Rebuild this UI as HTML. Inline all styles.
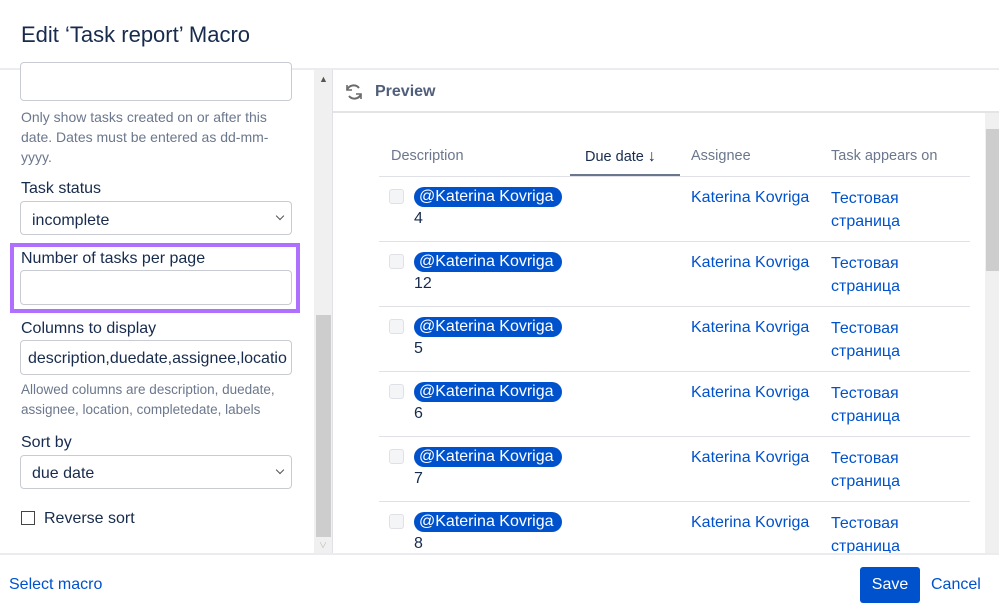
<!DOCTYPE html>
<html><head><style>
*{box-sizing:border-box;margin:0;padding:0}
body{width:999px;height:609px;overflow:hidden;background:#fff;font-family:"Liberation Sans","Noto Sans CJK SC",sans-serif;color:#172b4d;position:relative}
.abs{position:absolute}
.inp{position:absolute;left:20px;width:272px;border:1px solid #c8ccd2;border-radius:4px;background:#fff;font-size:16px;color:#172b4d;padding-left:11px}
.lbl{position:absolute;left:21px;font-size:16px;color:#172b4d}
.help{position:absolute;left:21px;font-size:13.5px;color:#6b778c;line-height:20px;width:270px}
.th{position:absolute;top:148px;font-size:14.5px;color:#6b778c}
.row{position:absolute;left:379px;width:591px;height:65px;border-top:1px solid #dfe1e6}
.cb{position:absolute;left:10px;top:12px;width:15px;height:15px;border:1px solid #dfe1e6;border-radius:3px;background:#f4f5f7}
.badge{position:absolute;left:35px;top:10px;height:20px;width:148px;background:#0052cc;color:#fff;border-radius:10px;font-size:16px;line-height:20px;padding-left:5px}
.num{position:absolute;left:35px;top:33px;font-size:16px;color:#172b4d}
.as{position:absolute;left:312px;top:12px;font-size:16px;color:#0052cc}
.pg{position:absolute;left:452px;top:10px;font-size:16px;color:#0052cc;line-height:23px}
.chev{position:absolute;right:8px;top:50%;margin-top:-5px;width:6px;height:6px;border-right:1.3px solid #555;border-bottom:1.3px solid #555;transform:rotate(45deg)}
</style></head><body>
<div class="abs" style="left:21px;top:22px;font-size:22px;color:#172b4d">Edit ‘Task report’ Macro</div>
<div class="abs" style="left:0;top:68px;width:999px;height:2px;background:#ebecf0"></div>

<!-- left panel -->
<div class="inp" style="top:62px;height:39px"></div>
<div class="help" style="top:107px;font-size:14px;width:252px">Only show tasks created on or after this date. Dates must be entered as dd-mm-yyyy.</div>
<div class="lbl" style="top:180px">Task status</div>
<div class="inp" style="top:201px;height:34px;line-height:38px;overflow:hidden">incomplete<span class="chev"></span></div>
<div class="abs" style="left:10px;top:243px;width:290px;height:70px;border:4px solid #b070ff"></div>
<div class="lbl" style="top:250px">Number of tasks per page</div>
<div class="inp" style="top:270px;height:35px"></div>
<div class="lbl" style="top:320px">Columns to display</div>
<div class="inp" style="top:340px;height:35px;line-height:35px;overflow:hidden;white-space:nowrap;padding-left:7px">description,duedate,assignee,locatio</div>
<div class="help" style="top:380px">Allowed columns are description, duedate, assignee, location, completedate, labels</div>
<div class="lbl" style="top:434px">Sort by</div>
<div class="inp" style="top:455px;height:34px;line-height:36px">due date<span class="chev"></span></div>
<div class="abs" style="left:21px;top:511px;width:14px;height:14px;border:1.5px solid #444"></div>
<div class="lbl" style="left:44px;top:510px">Reverse sort</div>

<!-- left scrollbar -->
<div class="abs" style="left:314px;top:70px;width:18px;height:483px;background:#f0f0f0"></div>
<div class="abs" style="left:316px;top:315px;width:15px;height:222px;background:#cdcdcd"></div>
<div class="abs" style="left:319px;top:74px;font-size:9px;color:#555">▲</div>
<div class="abs" style="left:319px;top:540px;font-size:8px;color:#bbb">∨</div>

<!-- right panel -->
<div class="abs" style="left:332px;top:70px;width:1px;height:483px;background:#dfe1e6"></div>
<svg class="abs" style="left:344px;top:82px" width="20" height="20" viewBox="0 0 20 20" fill="none" stroke="#6b6b6b" stroke-width="2"><path d="M15 6A7 7 0 0 0 3 8"/><path d="M5 14A7 7 0 0 0 17 12"/><path d="M3 3v5h5" stroke-width="1.6"/><path d="M17 17v-5h-5" stroke-width="1.6"/></svg>
<div class="abs" style="left:375px;top:83px;font-size:16px;font-weight:bold;color:#505f79">Preview</div>
<div class="abs" style="left:333px;top:111px;width:666px;height:2px;background:#e4e4e4"></div>
<div class="abs" style="left:985px;top:113px;width:14px;height:440px;background:#f0f0f0"></div>
<div class="abs" style="left:986px;top:129px;width:13px;height:142px;background:#cdcdcd"></div>

<div class="th" style="left:391px">Description</div>
<div class="th" style="left:585px;color:#172b4d">Due date <b style="font-size:16px">↓</b></div>
<div class="abs" style="left:570px;top:174px;width:110px;height:2px;background:#6b778c"></div>
<div class="th" style="left:691px">Assignee</div>
<div class="th" style="left:831px">Task appears on</div>

<div class="row" style="top:176px"><div class="cb"></div><div class="badge">@Katerina Kovriga</div><div class="num">4</div><div class="as">Katerina Kovriga</div><div class="pg">Тестовая<br>страница</div></div>
<div class="row" style="top:241px"><div class="cb"></div><div class="badge">@Katerina Kovriga</div><div class="num">12</div><div class="as">Katerina Kovriga</div><div class="pg">Тестовая<br>страница</div></div>
<div class="row" style="top:306px"><div class="cb"></div><div class="badge">@Katerina Kovriga</div><div class="num">5</div><div class="as">Katerina Kovriga</div><div class="pg">Тестовая<br>страница</div></div>
<div class="row" style="top:371px"><div class="cb"></div><div class="badge">@Katerina Kovriga</div><div class="num">6</div><div class="as">Katerina Kovriga</div><div class="pg">Тестовая<br>страница</div></div>
<div class="row" style="top:436px"><div class="cb"></div><div class="badge">@Katerina Kovriga</div><div class="num">7</div><div class="as">Katerina Kovriga</div><div class="pg">Тестовая<br>страница</div></div>
<div class="row" style="top:501px;height:52px;overflow:hidden"><div class="cb"></div><div class="badge">@Katerina Kovriga</div><div class="num">8</div><div class="as">Katerina Kovriga</div><div class="pg">Тестовая<br>страница</div></div>

<!-- footer -->
<div class="abs" style="left:0;top:553px;width:999px;height:2px;background:#ebecf0"></div>
<div class="abs" style="left:9px;top:576px;font-size:16px;color:#0052cc">Select macro</div>
<div class="abs" style="left:860px;top:567px;width:60px;height:36px;background:#0052cc;border-radius:3px;color:#fff;font-size:16px;line-height:36px;text-align:center">Save</div>
<div class="abs" style="left:931px;top:576px;font-size:16px;color:#0052cc">Cancel</div>
</body></html>
